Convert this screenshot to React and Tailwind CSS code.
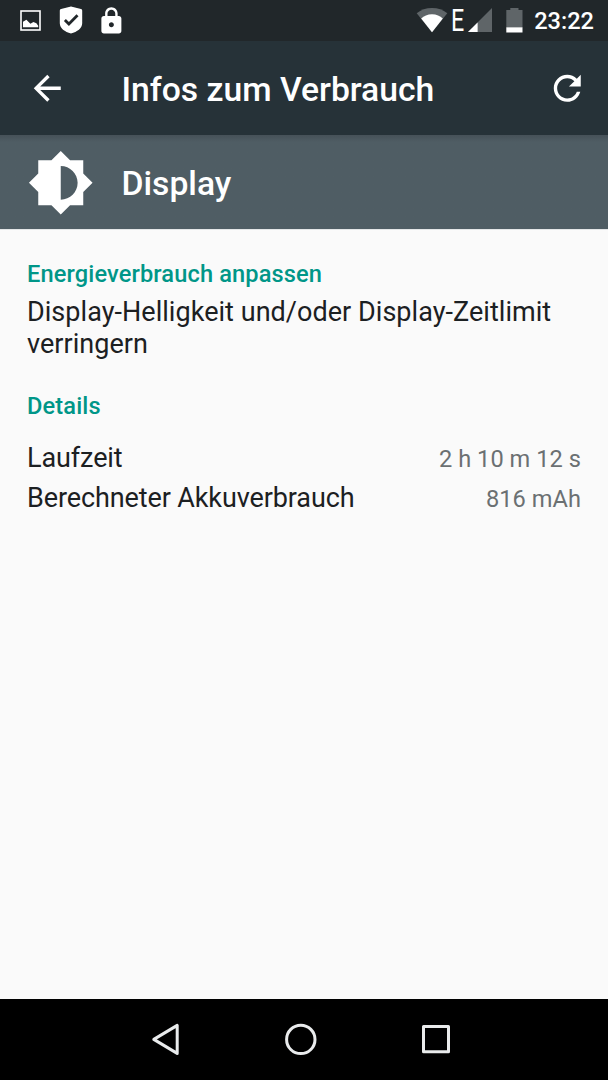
// BatteryUsageDetails
const StatusBar = () => {
  return (
    <div className="flex h-[41px] items-center justify-between bg-[#21272a] pl-[20px] pr-[14px] text-white">
      <div className="flex h-full items-start pt-[6px]">
        {/* Screenshot saved */}
        <svg width="22" height="28" viewBox="0 0 22 28">
          <rect x="1" y="5" width="19" height="19" fill="none" stroke="white" strokeWidth="1.6" />
          <path d="M3 21.3v-5.6l3.4-2 4 4 3-1.7 3 1.2 1.8 2.6v1.5z" fill="white" />
        </svg>
        <svg className="ml-[17px]" width="24" height="28" viewBox="0 0 24 28">
          <path
            fillRule="evenodd"
            d="M12 .6 22 3c.8.2 1.2.7 1.2 1.5v12.8c0 5-5 8.6-11.2 10.2C5.8 25.9.8 22.3.8 17.3V4.5C.8 3.7 1.2 3.2 2 3zM17.5 8.3l-7.6 7.6-3-3-2 2 5 5 9.6-9.6z"
            fill="white"
          />
        </svg>
        <svg className="ml-[13px]" width="30" height="30" viewBox="-0.3 0 24 24">
          <path
            d="M18 8h-1V6c0-2.76-2.24-5-5-5S7 3.24 7 6v2H6c-1.1 0-2 .9-2 2v10c0 1.1.9 2 2 2h12c1.1 0 2-.9 2-2V10c0-1.1-.9-2-2-2zm-6 9c-1.1 0-2-.9-2-2s.9-2 2-2 2 .9 2 2-.9 2-2 2zm3.1-9H8.9V6c0-1.71 1.39-3.1 3.1-3.1 1.71 0 3.1 1.39 3.1 3.1v2z"
            fill="white"
          />
        </svg>
      </div>

      <div className="flex h-full items-start">
        <svg className="mt-[7px]" width="32" height="26" viewBox="0 0 32 26">
          <path d="M16 25.3.7 6.2C5 2.8 10 1 16 1s11 1.800 15.3 5.2z" fill="#5f6568" />
          <path d="M16 25.3 5.2 11.500C8 9 11.500 7.300 16 7.300s8 1.700 10.800 4.200z" fill="white" />
        </svg>
        <span className="ml-[3px] mt-[5px] w-[17px] origin-left scale-x-75 text-[31px] leading-[32px]">E</span>
        <svg className="mt-[7px]" width="25" height="26" viewBox="0 0 25 26">
          <path d="M0 25 24 1v24z" fill="#5f6568" />
          <path d="M0 25 9.6 15.4V25z" fill="white" />
        </svg>
        <svg className="ml-[13px] mt-[7px]" width="17" height="26" viewBox="0 0 17 26">
          <path d="M4.3 1h8.2v2h4v17.5H.3V3h4z" fill="#5f6568" />
          <path d="M.3 20.3h16.2v5.2H.3z" fill="white" />
        </svg>
        <span className="ml-[11px] mt-[7px] text-[23.6px] font-medium leading-[28px]">23:22</span>
      </div>
    </div>
  );
};

const AppBar = () => {
  return (
    <header className="flex h-[94px] items-center bg-[#263238] pl-[27px] pr-[21px] text-white">
      <svg width="40.5" height="40.5" viewBox="0 0 24 24" fill="white">
        <path d="M20 11H7.83l5.59-5.59L12 4l-8 8 8 8 1.41-1.41L7.83 13H20v-2z" />
      </svg>
      <h1 className="ml-[54px] flex-1 pt-[3px] text-[33.7px] font-medium leading-[40px]">
        Infos zum Verbrauch
      </h1>
      <svg width="40.5" height="40.5" viewBox="0 0 24 24" fill="white">
        <path d="M17.65 6.35C16.2 4.9 14.21 4 12 4c-4.42 0-7.99 3.58-7.99 8s3.57 8 7.99 8c3.73 0 6.84-2.55 7.73-6h-2.08c-.82 2.33-3.04 4-5.65 4-3.31 0-6-2.69-6-6s2.69-6 6-6c1.66 0 3.14.69 4.22 1.78L13 11h7V4l-2.35 2.35z" />
      </svg>
    </header>
  );
};

const DetailRows = () => {
  const rows = [
    { label: 'Laufzeit', value: '2 h 10 m 12 s' },
    { label: 'Berechneter Akkuverbrauch', value: '816 mAh' },
  ];

  return (
    <div className="mt-[18px]">
      {rows.map((row) => (
        <div key={row.label} className="flex h-10 items-baseline justify-between">
          <span className="text-[27px] leading-[40px] tracking-[-0.11px] text-[#1c2022]">{row.label}</span>
          <span className="text-[23.6px] tracking-[0.05px] text-[#6b7072]">{row.value}</span>
        </div>
      ))}
    </div>
  );
};

const NavigationBar = () => {
  return (
    <nav className="flex h-[81px] items-center justify-center gap-[95px] bg-black pb-[1px] pr-[7px]">
      <svg width="40" height="40" viewBox="0 0 40 40" fill="none" stroke="#e9ebec" strokeWidth="3" strokeLinejoin="round">
        <path d="M7.8 20.4 31.2 6.4v28z" />
      </svg>
      <svg width="40" height="40" viewBox="0 0 40 40" fill="none" stroke="#e9ebec" strokeWidth="3">
        <circle cx="19.8" cy="20.4" r="14.2" />
      </svg>
      <svg width="40" height="40" viewBox="0 0 40 40" fill="none" stroke="#e9ebec" strokeWidth="3" strokeLinejoin="round">
        <rect x="7.5" y="7.5" width="25" height="25.3" />
      </svg>
    </nav>
  );
};

export default function App() {
  return (
    <div className="flex h-screen w-full flex-col overflow-hidden bg-[#fafafa] font-['Roboto',sans-serif]">
      <StatusBar />
      <AppBar />

      <div className="flex h-[94px] items-center bg-linear-to-b from-[#465158] to-[#4f5d64] to-[7px] pl-[27px] text-white">
        <svg className="mt-[1px]" width="67.5" height="67.5" viewBox="0 0 24 24" fill="white">
          <path d="M20 15.31L23.31 12 20 8.69V4h-4.69L12 .69 8.69 4H4v4.69L.69 12 4 15.31V20h4.69L12 23.31 15.31 20H20v-4.69zM12 18V6c3.31 0 6 2.69 6 6s-2.69 6-6 6z" />
        </svg>
        <h2 className="ml-[27px] pt-[3px] text-[33.7px] font-medium leading-[40px]">Display</h2>
      </div>

      <main className="flex-1 border-t border-[#e4e6e7] px-[27px] pt-[30px]">
        <h3 className="text-[23.6px] font-medium leading-[28px] tracking-[0.13px] text-[#009688]">
          Energieverbrauch anpassen
        </h3>
        <p className="mt-2 text-[27px] leading-[32px] tracking-[0.04px] text-[#1c2022]">
          Display-Helligkeit und/oder Display-Zeitlimit verringern
        </p>
        <h3 className="mt-[32px] text-[23.6px] font-medium leading-[28px] tracking-[0.13px] text-[#009688]">Details</h3>
        <DetailRows />
      </main>

      <NavigationBar />
    </div>
  );
}
